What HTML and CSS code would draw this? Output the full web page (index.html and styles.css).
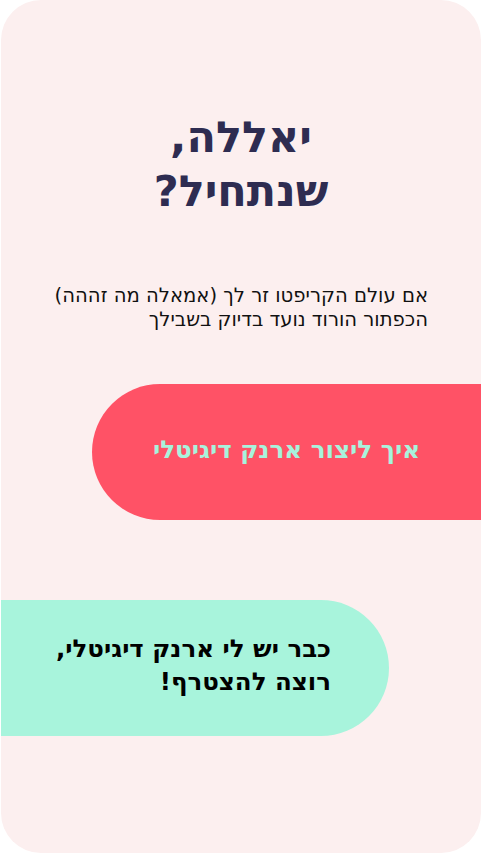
FILE: index.html
```html
<!DOCTYPE html>
<html lang="he" dir="rtl">
<head>
<meta charset="utf-8">
<link rel="stylesheet" href="styles.css">
</head>
<body>
<main class="card">
  <h1 class="title">יאללה,<br>שנתחיל?</h1>
  <p class="intro">אם עולם הקריפטו זר לך (אמאלה מה זההה)<br>הכפתור הורוד נועד בדיוק בשבילך</p>
  <div class="actions">
    <a class="btn btn-create" href="#">איך ליצור ארנק דיגיטלי</a>
    <a class="btn btn-join" href="#">כבר יש לי ארנק דיגיטלי,<br>רוצה להצטרף!</a>
  </div>
</main>
</body>
</html>
```
FILE: styles.css
```css
html, body {
  margin: 0;
  padding: 0;
  background: #ffffff;
}
body {
  font-family: "DejaVu Sans", sans-serif;
}
.card {
  width: 480px;
  height: 853px;
  background: #fcefef;
  border-radius: 40px;
  overflow: hidden;
  display: flex;
  flex-direction: column;
  box-sizing: border-box;
  padding-top: 110px;
}
.title {
  margin: 0;
  text-align: center;
  font-size: 43px;
  line-height: 54px;
  font-weight: 700;
  color: #2e2c51;
}
.intro {
  margin: 66px 0 0 0;
  padding-right: 53px;
  text-align: right;
  font-size: 19.6px;
  line-height: 24px;
  color: #111111;
}
.actions {
  display: flex;
  flex-direction: column;
  margin-top: 52px;
}
.btn {
  display: flex;
  align-items: center;
  text-decoration: none;
  font-weight: 700;
  height: 136px;
  box-sizing: border-box;
}
.btn-create {
  align-self: flex-start;
  width: 389px;
  background: #ff5266;
  color: #a8f3dc;
  border-radius: 68px 0 0 68px;
  font-size: 24.6px;
  justify-content: center;
  padding-bottom: 5px;
}
.btn-join {
  align-self: flex-end;
  margin-top: 80px;
  width: 388px;
  background: #a8f4dc;
  color: #000000;
  border-radius: 0 68px 68px 0;
  font-size: 24.5px;
  line-height: 33px;
  padding-right: 58px;
  padding-bottom: 6px;
}
```
